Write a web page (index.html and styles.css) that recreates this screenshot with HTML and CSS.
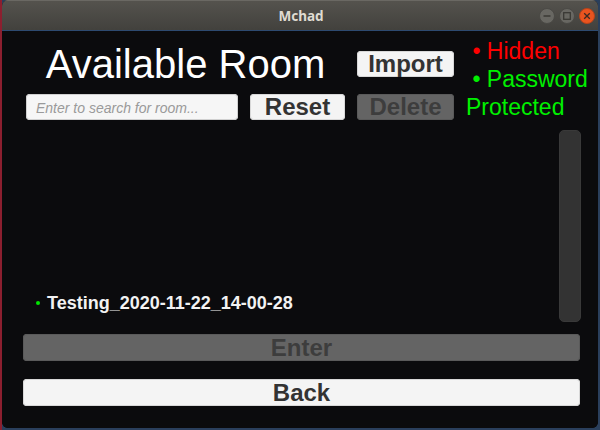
FILE: index.html
```html
<!DOCTYPE html>
<html>
<head>
<meta charset="utf-8">
<link rel="stylesheet" href="styles.css">
</head>
<body>
<div class="window">
  <div class="titlebar">
    <div></div>
    <div class="title">Mchad</div>
    <div class="controls">
      <svg class="wbtn" width="16" height="16" viewBox="0 0 16 16"><circle cx="8" cy="8" r="7.5" fill="#686762" stroke="#4a4945"/><line x1="4.5" y1="8" x2="11.5" y2="8" stroke="#3a3935" stroke-width="1.4"/></svg>
      <svg class="wbtn" width="16" height="16" viewBox="0 0 16 16"><circle cx="8" cy="8" r="7.5" fill="#686762" stroke="#4a4945"/><rect x="4.7" y="4.7" width="6.6" height="6.6" fill="none" stroke="#3a3935" stroke-width="1.3"/></svg>
      <svg class="wbtn" width="16" height="16" viewBox="0 0 16 16"><circle cx="8" cy="8" r="7.5" fill="#e9541f" stroke="#b9431a"/><path d="M5.2 5.2 L10.8 10.8 M10.8 5.2 L5.2 10.8" stroke="#3a2a22" stroke-width="1.3"/></svg>
    </div>
  </div>
  <div class="content">
    <div class="header">
      <h1 class="heading">Available Room</h1>
      <button class="btn btn-light import">Import</button>
      <div class="legend">
        <div class="legend-hidden">&nbsp;• Hidden</div>
        <div class="legend-pw">&nbsp;• Password Protected</div>
      </div>
      <input class="search" type="text" placeholder="Enter to search for room...">
      <button class="btn btn-light">Reset</button>
      <button class="btn btn-disabled">Delete</button>
    </div>
    <div class="rooms">
      <div class="list">
        <div class="room"><span class="dot"></span>Testing_2020-11-22_14-00-28</div>
      </div>
      <div class="scrollbar"></div>
    </div>
    <button class="btn btn-disabled wide enter">Enter</button>
    <button class="btn btn-light wide back">Back</button>
  </div>
</div>
</body>
</html>
```

FILE: styles.css
```css
html, body {
  margin: 0;
  padding: 0;
}
body {
  width: 600px;
  height: 430px;
  background: #2a3f5c;
  border-left: 2px solid #8c1f2f;
  box-sizing: border-box;
  overflow: hidden;
}
.window {
  width: 596px;
  height: 428px;
  display: flex;
  flex-direction: column;
  border-radius: 6px 6px 6px 6px;
  overflow: hidden;
  background: #0b0b0d;
}
.titlebar {
  height: 30px;
  flex: none;
  display: grid;
  grid-template-columns: 1fr auto 1fr;
  align-items: center;
  background: linear-gradient(#55534e, #42413d);
  box-shadow: inset 0 1px 0 #6a6863;
}
.title {
  font-family: "Noto Sans", "DejaVu Sans", sans-serif;
  font-weight: 700;
  font-size: 13.5px;
  color: #dfdbd2;
  padding-left: 2px;
  padding-top: 1px;
}
.controls {
  display: flex;
  justify-content: flex-end;
  gap: 4px;
  padding-right: 3px;
  padding-top: 1px;
}
.wbtn {
  display: block;
}
.content {
  flex: 1;
  border-top: 1px solid #2d4a70;
  background: #0b0b0d;
  padding: 6px 18px 0 21px;
  display: flex;
  flex-direction: column;
  font-family: "Liberation Sans", Arial, sans-serif;
}
.header {
  display: grid;
  grid-template-columns: 212px 95px 97px 1fr;
  grid-template-rows: 51px 26px;
  column-gap: 12px;
  row-gap: 6px;
  margin-left: 3px;
  margin-right: -16px;
}
.heading {
  grid-column: 1 / 3;
  grid-row: 1;
  margin: 4px 0 0 0;
  font-size: 40px;
  line-height: 46px;
  font-weight: 400;
  color: #ffffff;
  text-align: center;
  align-self: start;
}
.btn {
  font-family: "Liberation Sans", Arial, sans-serif;
  font-weight: 700;
  font-size: 24px;
  line-height: 26px;
  padding: 0;
  margin: 0;
  border: none;
  border-radius: 4px;
  height: 26px;
  text-align: center;
}
.btn-light {
  background: #f4f4f4;
  color: #333333;
  box-shadow: inset 0 0 0 1px #d8d8d8;
}
.btn-disabled {
  background: #646464;
  color: #3d3d3d;
  box-shadow: inset 0 0 0 1px #5a5a5a;
}
.import {
  grid-column: 3;
  grid-row: 1;
  margin-top: 14px;
  align-self: start;
}
.legend {
  grid-column: 4;
  grid-row: 1 / 3;
  font-size: 23px;
  line-height: 28px;
  margin-top: 0;
}
.legend-hidden {
  color: #ff0000;
}
.legend-pw {
  color: #00f000;
}
.search {
  grid-column: 1;
  grid-row: 2;
  box-sizing: border-box;
  width: 212px;
  height: 26px;
  margin: 0;
  border: none;
  border-radius: 4px;
  background: #f6f6f6;
  box-shadow: inset 0 0 0 1px #d0d0d0;
  padding: 1px 0 0 10px;
  font-family: "Liberation Sans", Arial, sans-serif;
  font-size: 14px;
  font-style: italic;
  outline: none;
}
.search::placeholder {
  color: #9a9a9a;
}
.rooms {
  display: flex;
  height: 200px;
  margin-top: 6px;
  margin-left: 3px;
  margin-right: -1px;
}
.list {
  flex: 1;
  display: flex;
  flex-direction: column;
  justify-content: flex-end;
  padding-bottom: 12px;
}
.room {
  display: flex;
  align-items: center;
  padding-left: 10px;
  font-size: 18px;
  line-height: 22px;
  font-weight: 700;
  color: #f2f2f2;
}
.dot {
  width: 4px;
  height: 4px;
  border-radius: 50%;
  background: #00e600;
  margin-right: 7px;
}
.scrollbar {
  width: 22px;
  height: 192px;
  margin-top: 4px;
  box-sizing: border-box;
  border-radius: 5px;
  background: #333333;
  border: 1px solid #393939;
}
.wide {
  width: 557px;
  height: 27px;
  line-height: 27px;
  flex: none;
}
.enter {
  margin-top: 8px;
}
.back {
  margin-top: 18px;
}
```
